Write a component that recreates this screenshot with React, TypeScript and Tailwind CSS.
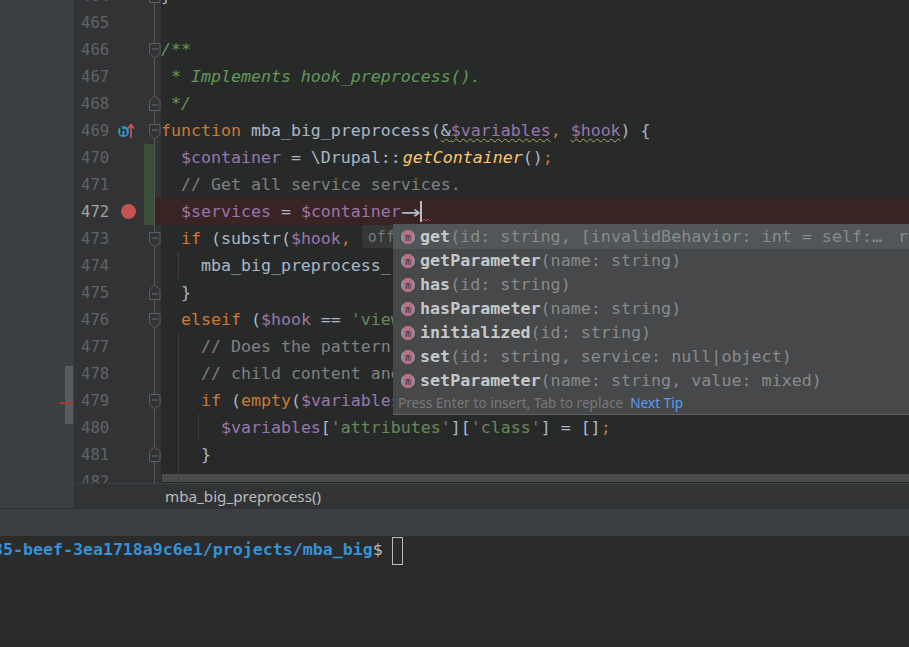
import React from 'react';

const mono = "font-['DejaVu_Sans_Mono','Liberation_Mono',monospace]";
const ui = "font-['Noto_Sans','Liberation_Sans',sans-serif]";

const K = ({ children }: { children: React.ReactNode }) => <span className="text-[#cc7832]">{children}</span>;
const V = ({ children }: { children: React.ReactNode }) => <span className="text-[#9876aa]">{children}</span>;
const Cm = ({ children }: { children: React.ReactNode }) => <span className="text-[#808080]">{children}</span>;
const Doc = ({ children }: { children: React.ReactNode }) => <span className="italic text-[#629755]">{children}</span>;
const S = ({ children }: { children: React.ReactNode }) => <span className="text-[#6a8759]">{children}</span>;
const Warn = ({ children }: { children: React.ReactNode }) => (
  <span className="underline decoration-wavy decoration-[#a8a860] decoration-1 underline-offset-2">{children}</span>
);

type Line = {
  n: number;
  code?: React.ReactNode;
  fold?: 'open' | 'close';
  changed?: boolean;
  active?: boolean;
  marker?: 'breakpoint' | 'hook';
};

const lines: Line[] = [
  { n: 464, code: '}', fold: 'close' },
  { n: 465 },
  { n: 466, code: <Doc>/**</Doc>, fold: 'open' },
  { n: 467, code: <Doc> * Implements hook_preprocess().</Doc> },
  { n: 468, code: <Doc> */</Doc>, fold: 'close' },
  {
    n: 469,
    fold: 'open',
    marker: 'hook',
    code: (
      <>
        <K>function</K> mba_big_preprocess(<Warn>&amp;<V>$variables</V></Warn><K>,</K> <Warn><V>$hook</V></Warn>) {'{'}
      </>
    ),
  },
  {
    n: 470,
    changed: true,
    code: (
      <>
        {'  '}<V>$container</V> = \Drupal::
        <span className="ml-[2px] italic text-[#ffc66d]">getContainer</span>()<K>;</K>
      </>
    ),
  },
  { n: 471, changed: true, code: <>{'  '}<Cm>// Get all service services.</Cm></> },
  {
    n: 472,
    changed: true,
    active: true,
    marker: 'breakpoint',
    code: (
      <>
        {'  '}<V>$services</V> = <V>$container</V>
        <span className="inline-block w-[2ch] origin-left scale-x-[2] scale-y-[1.4]">→</span>
      </>
    ),
  },
  {
    n: 473,
    fold: 'open',
    code: (
      <>
        {'  '}<K>if</K> (substr(<V>$hook</V><K>,</K>{' '}
        <span className="ml-[1px] inline-block h-[23px] w-[60px] rounded-[3px] bg-[#353636] pl-[6px] align-top text-[15px] leading-[24px] text-[#787878]">offset:</span>
      </>
    ),
  },
  { n: 474, code: <>{'    '}mba_big_preprocess_</> },
  { n: 475, fold: 'close', code: <>{'  }'}</> },
  { n: 476, fold: 'open', code: <>{'  '}<K>elseif</K> (<V>$hook</V> == <S>'view</S></> },
  { n: 477, code: <>{'    '}<Cm>// Does the pattern</Cm></> },
  { n: 478, code: <>{'    '}<Cm>// child content and</Cm></> },
  { n: 479, fold: 'open', code: <>{'    '}<K>if</K> (<K>empty</K>(<V>$variables</V></> },
  {
    n: 480,
    code: (
      <>
        {'      '}<V>$variables</V>[<S>'attributes'</S>][<S>'class'</S>] = []<K>;</K>
      </>
    ),
  },
  { n: 481, fold: 'close', code: <>{'    }'}</> },
  { n: 482 },
];

const completions = [
  { name: 'get', params: '(id: string, [invalidBehavior: int = self:…', type: 'r' },
  { name: 'getParameter', params: '(name: string)' },
  { name: 'has', params: '(id: string)' },
  { name: 'hasParameter', params: '(name: string)' },
  { name: 'initialized', params: '(id: string)' },
  { name: 'set', params: '(id: string, service: null|object)' },
  { name: 'setParameter', params: '(name: string, value: mixed)' },
];

const FoldIcon = ({ kind }: { kind: 'open' | 'close' }) => (
  <svg
    width="12"
    height="16"
    viewBox="0 0 12 16"
    className={`absolute -left-[6px] ${kind === 'open' ? 'top-[7px]' : 'top-[5px]'}`}
  >
    <path
      d={kind === 'open' ? 'M.5.5h10.5v10L5.75 15 .5 10.5z' : 'M.5 15.5h10.5v-10L5.75 1 .5 5.5z'}
      fill="#313335"
      stroke="#5c5f61"
    />
    <path d={kind === 'open' ? 'M3 6h6' : 'M3 10h6'} stroke="#6b6e70" />
  </svg>
);

const MethodIcon = () => (
  <svg width="16" height="16" viewBox="0 0 16 16" className="shrink-0">
    <circle cx="8" cy="8" r="7" fill="#8f999e" />
    <rect x="3" y="1" width="10" height="14" rx="5" fill="#bd6f82" />
    <text x="8" y="11.5" textAnchor="middle" fontSize="10" fontFamily="DejaVu Sans Mono" fill="#3a3033">m</text>
  </svg>
);

const HookIcon = () => (
  <svg width="19" height="18" viewBox="0 0 19 18">
    <circle cx="6.5" cy="9.5" r="5.5" fill="#3592c4" />
    <text x="6.5" y="13" textAnchor="middle" fontSize="11" fontWeight="700" fontFamily="DejaVu Sans" fill="#2b2b2b">h</text>
    <path d="M14 16V3M11 6.5 14 2.5l3 4" fill="none" stroke="#d9534f" strokeWidth="1.6" />
  </svg>
);

const Row = ({ line }: { line: Line }) => (
  <div className="flex h-[27px] shrink-0">
    <div className={`flex w-[87px] shrink-0 bg-[#313335] ${mono}`}>
      <div className={`w-[43px] pl-[7px] text-[15.6px] leading-[28px] ${line.active ? 'text-[#a4a3a3]' : 'text-[#606366]'}`}>
        {line.n}
      </div>
      <div className="flex w-[27px] items-center">
        {line.marker === 'breakpoint' && <div className="ml-[4px] h-[15px] w-[15px] rounded-full bg-[#c75450]" />}
        {line.marker === 'hook' && <HookIcon />}
      </div>
      <div className={`w-[10px] ${line.changed ? 'bg-[#3a4f38]' : ''}`} />
      <div className={`relative z-10 w-[7px] border-l border-[#555758] ${line.active ? 'bg-[#3a2323]' : ''}`}>
        {line.fold && <FoldIcon kind={line.fold} />}
      </div>
    </div>
    <div className={`relative min-w-0 flex-1 whitespace-pre text-[16.6px] leading-[27px] text-[#a9b7c6] ${mono} ${line.active ? 'bg-[#3a2323]' : ''}`}>
      {line.code}
      {line.active && (
        <>
          <span className="absolute left-[259px] top-[3px] h-[21px] w-[2px] bg-[#bbbbbb]" />
          <svg width="9" height="4" viewBox="0 0 9 4" className="absolute left-[261px] top-[20px]">
            <path d="M0 3l2-2 2 2 2-2 2 2" fill="none" stroke="#bc3f3c" />
          </svg>
        </>
      )}
    </div>
  </div>
);

const App = () => {
  return (
    <div className={`relative flex h-[647px] w-[909px] flex-col overflow-hidden bg-[#2b2b2b] ${mono}`}>
      <div className="flex h-[509px] shrink-0 border-b border-[#323232]">
        {/* Left tool panel */}
        <div className="relative w-[74px] shrink-0 bg-[#3c3f41]">
          <div className="absolute left-[65px] top-[366px] h-[58px] w-[8px] bg-[#5a5b5d]" />
          <div className="absolute left-[60px] top-[402px] h-[2px] w-[14px] bg-[#a33a38]" />
        </div>

        <div className="flex min-w-0 flex-1 flex-col">
          {/* Editor */}
          <div className="relative h-[483px] shrink-0 overflow-hidden bg-[#282a2a]">
            <div className="-mt-[18px] flex flex-col">
              {lines.map((line) => (
                <Row key={line.n} line={line} />
              ))}
            </div>
            <div className="absolute left-[104px] top-[252px] h-[26px] w-px bg-[#3b3d3d]" />
            <div className="absolute bottom-[1px] left-[88px] right-0 h-[8px] bg-[#4a4c4b]" />
            <div className="absolute left-[104px] top-[333px] h-[150px] w-px bg-[#3b3d3d]" />
            <div className="absolute left-[124px] top-[414px] h-[26px] w-px bg-[#3b3d3d]" />
          </div>

          {/* Breadcrumb */}
          <div className={`flex h-[25px] shrink-0 items-center border-t border-[#3c3f41] bg-[#313335] pl-[91px] text-[15.2px] text-[#bbbbbb] ${ui}`}>
            mba_big_preprocess()
          </div>
        </div>
      </div>

      <div className="h-[27px] shrink-0 bg-[#3c3f41]" />

      {/* Terminal */}
      <div className="flex flex-1 items-start whitespace-pre bg-[#2b2b2b] text-[16.6px] leading-[27px]">
        <span className="-ml-[7px] font-bold text-[#3592d4]">35-beef-3ea1718a9c6e1/projects/mba_big</span>
        <span className="text-[#bbbbbb]">$</span>
        <span className="ml-[9px] mt-px h-[28px] w-[11px] border border-[#bbbbbb]" />
      </div>

      {/* Completion popup */}
      <div className="absolute left-[393px] top-[224px] flex w-[516px] flex-col border-b border-[#606262] bg-[#46484a]">
        {completions.map((item, i) => (
          <div
            key={item.name}
            className={`flex items-center whitespace-pre pl-[7px] text-[16.7px] ${i === 0 ? 'h-[25px] bg-[#515658]' : 'h-[24px]'}`}
          >
            <MethodIcon />
            <span className="ml-[4px] font-bold text-[#c6c9cb]">{item.name}</span>
            <span className="text-[#888b8d]">{item.params}</span>
            {item.type && <span className="ml-auto pr-[1px] text-[#888b8d]">{item.type}</span>}
          </div>
        ))}
        <div className={`flex h-[21px] items-center pl-[5px] text-[13.6px] text-[#787878] ${ui}`}>
          Press Enter to insert, Tab to replace
          <span className="ml-[7px] text-[#589df6]">Next Tip</span>
        </div>
      </div>
    </div>
  );
};

export default App;
